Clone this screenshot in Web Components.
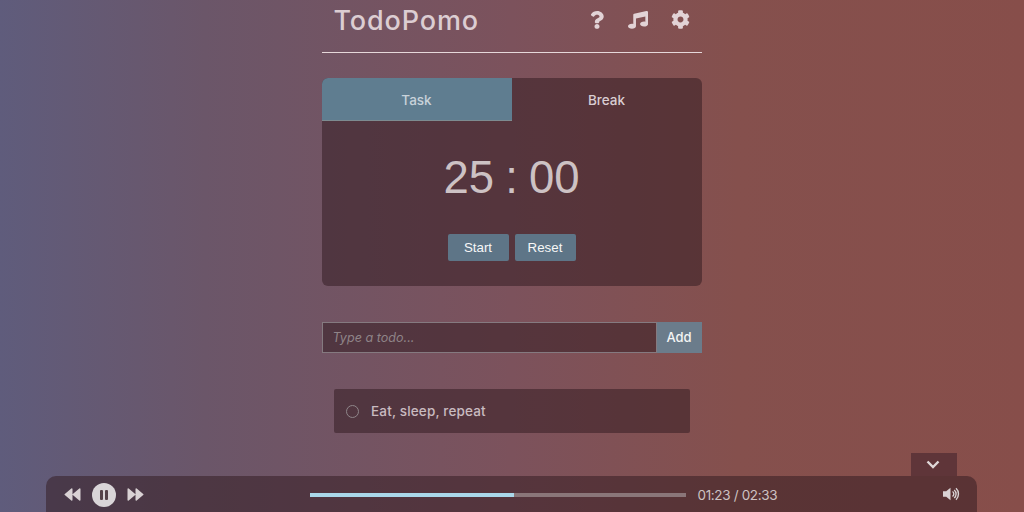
<!DOCTYPE html>
<html><head><meta charset="utf-8"><title>TodoPomo</title>
<style>
html,body{margin:0;height:100%;overflow:hidden}
body{background:linear-gradient(90deg,#5f5c7c 0%,#6b5669 20%,#7c525c 50%,#85504d 72%,#874e4a 100%);font-family:Inter,"Noto Sans",sans-serif;color:#dccdd0}
todo-app{height:512px;width:1023px}
</style></head><body>
<todo-app></todo-app>
<template id="t-app"><style>
:host{display:flex;flex-direction:column;align-items:center}
main{width:380px;display:flex;flex-direction:column;flex:1}
</style>
<main><app-header></app-header><pomo-timer></pomo-timer><todo-form></todo-form><todo-item>Eat, sleep, repeat</todo-item></main>
<player-bar></player-bar></template>

<template id="t-header"><style>
:host{display:flex;align-items:center;justify-content:space-between;height:52px;border-bottom:1px solid #e6d8da;padding:0 12px 0 12px;box-sizing:content-box}
h1{margin:0 0 11px;font:500 27px/40px Inter,sans-serif;letter-spacing:.85px;color:#dccdd2}
nav{display:flex;align-items:center;margin-bottom:13px;margin-right:0}
nav svg:nth-child(2){margin-left:24px}
nav svg:nth-child(3){margin-left:22.5px}
svg{display:block;fill:#e2d3d6}
</style><h1>TodoPomo</h1><nav>
<svg width="14" height="18" viewBox="0 0 384 512" preserveAspectRatio="none"><path d="M202 0C122 0 70 33 29 92c-8 11-5 26 5 34l43 33c11 8 26 6 34-4 25-31 43-49 82-49 30 0 68 19 68 49 0 22-18 34-48 51-35 20-81 44-81 105v10c0 13 11 24 24 24h72c13 0 24-11 24-24v-6c0-42 124-44 124-159C376 69 286 0 202 0zM192 370c-38 0-69 31-69 69s31 69 69 69 69-31 69-69-31-69-69-69z"/></svg>
<svg width="20" height="18" viewBox="0 0 512 512" preserveAspectRatio="none"><path d="M470 1L157 78c-13 3-22 15-22 29v262c-11-3-22-5-33-5C46 364 0 396 0 436s46 72 102 72 102-32 102-72V213l240-56v148c-11-3-22-5-33-5-56 0-102 32-102 72s46 72 102 72 102-32 102-72V32c0-21-22-37-43-31z"/></svg>
<svg width="19" height="19" viewBox="0 0 512 512"><path d="M487 316l-42-25c4-23 4-47 0-70l42-25c5-3 7-9 5-14-11-35-30-67-54-93-4-4-10-5-15-2l-42 25c-18-15-39-27-61-35V28c0-6-4-11-9-12-37-8-74-8-109 0-6 1-10 6-10 12v49c-22 8-43 20-61 35L89 87c-5-3-11-2-15 2-24 26-43 58-54 93-2 5 0 11 5 14l42 25c-4 23-4 47 0 70l-42 25c-5 3-7 9-5 14 11 35 30 67 54 93 4 4 10 5 15 2l42-25c18 15 39 27 61 35v49c0 6 4 11 10 12 37 8 74 8 109 0 5-1 9-6 9-12v-49c22-8 43-20 61-35l42 25c5 3 11 2 15-2 24-26 43-58 54-93 2-5 0-11-5-14zM256 336c-44 0-80-36-80-80s36-80 80-80 80 36 80 80-36 80-80 80z"/></svg>
</nav></template>

<template id="t-timer"><style>
:host{display:block;margin-top:25px;height:208px;border-radius:6px;overflow:hidden;background:rgba(50,26,32,.52)}
.tabs{display:flex;height:43px}
.tabs div{flex:1;display:flex;align-items:center;justify-content:center;font:500 13.5px Inter,sans-serif;color:#d9cdd2;box-sizing:border-box}
.on{background:#5f7d90;border-bottom:1px solid #7d8b90;color:#c8d2da!important;padding-top:1px}
.clock{font:400 45.5px/52px "Liberation Sans",sans-serif;word-spacing:-1.5px;color:#cdc2c4;text-align:center;margin-top:31px}
.btns{display:flex;justify-content:center;gap:6px;margin-top:29.5px}
</style><div class="tabs"><div class="on">Task</div><div>Break</div></div><div class="clock">25 : 00</div><div class="btns"><pomo-btn>Start</pomo-btn><pomo-btn>Reset</pomo-btn></div></template>

<template id="t-btn"><style>
:host{display:flex;align-items:center;justify-content:center;width:61px;height:27.5px;border-radius:2px;background:#5e7587;color:#f7f7f7;font:13.33px/26px "Liberation Sans",sans-serif}
span{padding-top:1px}
</style><span><slot></slot></span></template>

<template id="t-form"><style>
:host{display:flex;height:31px;margin-top:36px}
.i{flex:1;box-sizing:border-box;border:1px solid #857a80;background:rgba(50,26,32,.52);padding:0 0 1px 10px;display:flex;align-items:center;font:italic 400 12.6px Inter,sans-serif;color:#8f8488}
.a{width:45px;background:#6b7c8b;color:#f4f4f4;display:flex;align-items:center;justify-content:center;font:500 13px Inter,sans-serif;padding-bottom:1px;box-sizing:border-box}
</style><div class="i">Type a todo...</div><div class="a">Add</div></template>

<template id="t-item"><style>
:host{display:flex;align-items:center;height:44px;margin:36px 12px 0;border-radius:2px;background:rgba(50,26,32,.52);font:500 13.5px Inter,sans-serif;letter-spacing:.16px;color:#c9bbc0;gap:12.5px;padding-left:12px}
i{width:11px;height:11px;border:1.5px solid #8f868a;border-radius:50%;display:block}
</style><i></i><span><slot></slot></span></template>

<template id="t-player"><style>
:host{display:block;width:931px;position:relative;height:36px;border-radius:10px 10px 0 0;background:rgba(50,26,32,.52);color:#d8ccce}
.bar{display:flex;align-items:center;height:36px}
.tog{position:absolute;right:20px;top:-23px;width:46px;height:23px;box-sizing:border-box;padding-right:2px;background:#5f3539;display:flex;align-items:center;justify-content:center}
svg{display:block;fill:#d9d2d4}
.ctl{display:flex;align-items:center;gap:11px;margin-left:18px}
.pp{width:24px;height:24px;border-radius:50%;background:#d9d5d8;display:flex;align-items:center;justify-content:center;gap:2px;margin-top:2px}
.pp b{width:3px;height:10px;background:#544249;border-radius:1px}
.track{width:376px;height:4px;margin:2px 0 0 165.5px;background:#8a7679}
.track div{width:204px;height:4px;background:#aad8ea}
.time{margin:1px 0 0 12px;font:400 13.5px Inter,sans-serif;color:#cdc2c2;letter-spacing:-.35px}
.vol{margin-left:auto;margin-right:17px}
</style>
<div class="tog"><svg width="14" height="9" viewBox="0 0 14 9"><path d="M1.500 1.500L7 7l5.500-5.500" fill="none" stroke="#e0d8d8" stroke-width="2.400"/></svg></div>
<div class="bar"><div class="ctl">
<svg width="17" height="13" viewBox="0 0 17 13"><path d="M8.500 1v11a.8.800 0 0 1-1.200.6L.8 7.100a.8.800 0 0 1 0-1.200L7.300.4A.8.800 0 0 1 8.500 1zM16.500 1v11a.8.800 0 0 1-1.200.6L8.800 7.100a.8.800 0 0 1 0-1.200L15.300.4a.8.800 0 0 1 1.200.6z"/></svg>
<div class="pp"><b></b><b></b></div>
<svg width="17" height="13" viewBox="0 0 17 13"><path d="M.5 1v11a.8.800 0 0 0 1.200.6l6.500-5.500a.8.800 0 0 0 0-1.200L1.700.4A.8.800 0 0 0 .5 1zM8.500 1v11a.8.800 0 0 0 1.200.6l6.500-5.500a.8.800 0 0 0 0-1.200L9.700.4a.8.800 0 0 0-1.200.6z"/></svg></div>
<div class="track"><div></div></div><div class="time">01:23 / 02:33</div>
<svg class="vol" width="17" height="14" viewBox="0 0 17 14"><path d="M0 4.200h3.200L7.500.8v12.400L3.200 9.800H0z"/><path d="M9.500 4.500a3 3 0 0 1 0 5M11.200 3a5.200 5.200 0 0 1 0 8M13 1.300a7.800 7.800 0 0 1 0 11.400" fill="none" stroke="#d9d2d4" stroke-width="1.400"/></svg>
</div></template>

<script>
for(const [n,t] of [['todo-app','t-app'],['app-header','t-header'],['pomo-timer','t-timer'],['pomo-btn','t-btn'],['todo-form','t-form'],['todo-item','t-item'],['player-bar','t-player']]){
customElements.define(n,class extends HTMLElement{constructor(){super();this.attachShadow({mode:'open'}).appendChild(document.getElementById(t).content.cloneNode(true))}});
}
</script>
</body></html>
